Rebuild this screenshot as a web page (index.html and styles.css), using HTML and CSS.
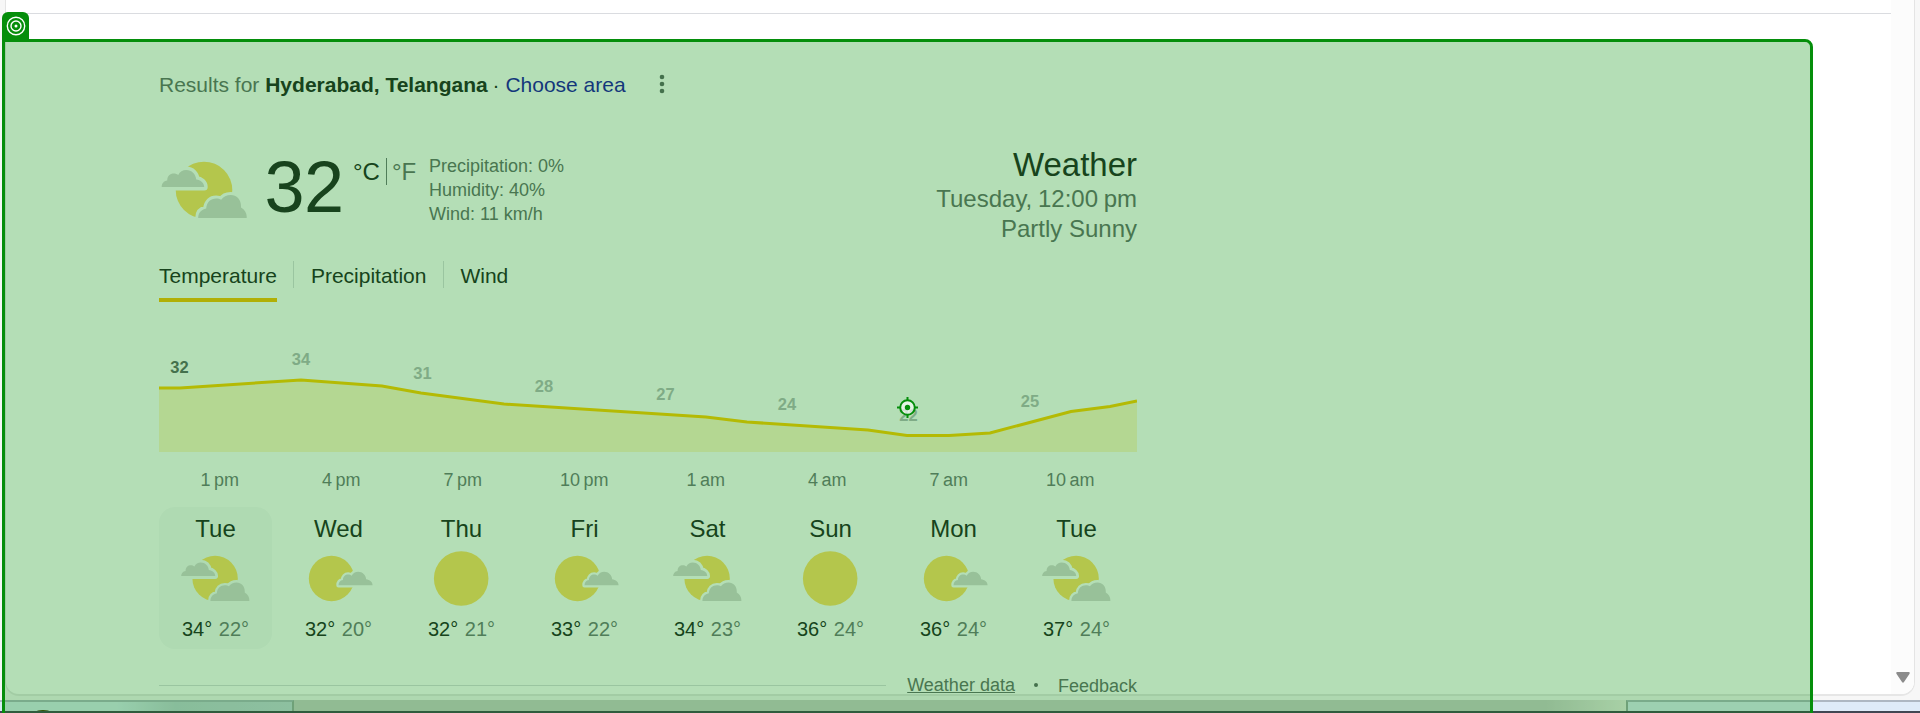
FILE: index.html
```
<!DOCTYPE html>
<html lang="en">
<head>
<meta charset="utf-8">
<title>Weather</title>
<link rel="stylesheet" href="styles.css">
</head>
<body>
<svg class="defs" width="0" height="0">
  <defs>
    <path id="cloud" d="M0 17C0 13.5 2 11 5.500 10.500C5.500 6 8.500 3.500 12 3.500C14 3.500 15 4 16.500 5C18 1.500 21 0 24.500 0C30 0 34 4 34.500 9.500C39 10 42.500 13 42.500 17Z"/>
    <path id="bigcloud" d="M0 23C0 18 3 14.500 8 13.500C8.500 7 12.500 3.500 18 3.500C20 3.500 21.500 3.800 23 4.800C25 1.500 28.500 0 32.500 0C38.500 0 42.800 4.500 42.800 11V12.500C46.500 14.500 48.500 18 48.500 21.500V23Z"/>
    <mask id="gaps" maskUnits="userSpaceOnUse" x="0" y="0" width="96" height="96">
      <rect width="96" height="96" fill="#fff"/>
      <use href="#cloud" x="2.700" y="28" stroke="#000" stroke-width="7" stroke-linejoin="round"/>
      <use href="#bigcloud" x="39.200" y="53" stroke="#000" stroke-width="6" stroke-linejoin="round"/>
    </mask>
    <mask id="gap" maskUnits="userSpaceOnUse" x="0" y="0" width="96" height="96">
      <rect width="96" height="96" fill="#fff"/>
      <use href="#cloud" x="48" y="39.500" stroke="#000" stroke-width="5.500" stroke-linejoin="round"/>
    </mask>
    <symbol id="partly" viewBox="0 0 96 96">
      <circle class="sun" cx="45" cy="48" r="28.300" mask="url(#gaps)"/>
      <use class="cloud" href="#cloud" x="2.700" y="28"/>
      <use class="cloud" href="#bigcloud" x="39.200" y="53"/>
    </symbol>
    <symbol id="mostly" viewBox="0 0 96 96">
      <circle class="sun" cx="39.300" cy="48" r="28.300" mask="url(#gap)"/>
      <use class="cloud" href="#cloud" x="48" y="39.500"/>
    </symbol>
    <symbol id="sunny" viewBox="0 0 96 96"><circle class="sun" cx="47.600" cy="48" r="34"/></symbol>
  </defs>
</svg>
<div class="window">
  <div class="panel">
    <div class="page">
      <div class="rule"></div>
      <main class="weather">
        <div class="results">
          <span>Results for <b>Hyderabad, Telangana</b> <span class="ink">·</span> <a class="link">Choose area</a></span>
          <svg class="more" width="6" height="20" viewBox="0 0 6 20"><circle cx="3" cy="3" r="2.300"/><circle cx="3" cy="10" r="2.300"/><circle cx="3" cy="17" r="2.300"/></svg>
        </div>
        <section class="current">
          <svg class="now-icon" width="96" height="96"><use href="#partly"/></svg>
          <div class="degrees">32</div>
          <div class="units"><span class="ink">°C</span><i></i><span>°F</span></div>
          <div class="details"><div>Precipitation: 0%</div><div>Humidity: 40%</div><div>Wind: 11 km/h</div></div>
          <div class="summary"><h1>Weather</h1><div class="when">Tuesday, 12:00 pm</div><div>Partly Sunny</div></div>
        </section>
        <nav class="tabs"><a class="tab active">Temperature</a><i></i><a class="tab">Precipitation</a><i></i><a class="tab">Wind</a></nav>
        <svg class="chart" width="978" height="112" viewBox="0 0 978 112">
          <path class="area" d="M0 48H21L142 40L223 46L262 53L345 64L547 77L588 82L709 90L748 95.500H790L831 93L912 71.500L951 66.500L978 61V112H0Z"/>
          <path class="line" d="M0 48H21L142 40L223 46L262 53L345 64L547 77L588 82L709 90L748 95.500H790L831 93L912 71.500L951 66.500L978 61"/>
          <g class="points"><text class="now" x="20.500" y="33">32</text><text x="142" y="25">34</text><text x="263.500" y="39">31</text><text x="385" y="52">28</text><text x="506.500" y="60">27</text><text x="628" y="70">24</text><text x="749.500" y="81">22</text><text x="871" y="67">25</text></g>
        </svg>
        <div class="hours"><span>1 pm</span><span>4 pm</span><span>7 pm</span><span>10 pm</span><span>1 am</span><span>4 am</span><span>7 am</span><span>10 am</span></div>
        <div class="days">
          <div class="day selected"><span>Tue</span><svg class="shift"><use href="#partly"/></svg><p>34° <em>22°</em></p></div>
          <div class="day"><span>Wed</span><svg><use href="#mostly"/></svg><p>32° <em>20°</em></p></div>
          <div class="day"><span>Thu</span><svg><use href="#sunny"/></svg><p>32° <em>21°</em></p></div>
          <div class="day"><span>Fri</span><svg><use href="#mostly"/></svg><p>33° <em>22°</em></p></div>
          <div class="day"><span>Sat</span><svg class="shift"><use href="#partly"/></svg><p>34° <em>23°</em></p></div>
          <div class="day"><span>Sun</span><svg><use href="#sunny"/></svg><p>36° <em>24°</em></p></div>
          <div class="day"><span>Mon</span><svg><use href="#mostly"/></svg><p>36° <em>24°</em></p></div>
          <div class="day"><span>Tue</span><svg class="shift"><use href="#partly"/></svg><p>37° <em>24°</em></p></div>
        </div>
        <footer class="source"><hr><a class="data">Weather data</a><span class="bullet"></span><a>Feedback</a></footer>
      </main>
    </div>
    <div class="scroll"><svg width="14" height="11" viewBox="0 0 14 11"><path d="M1.500 0H12.500C13.800 0 14 1 13.400 1.900L8 10Q7 11.400 6 10L.6 1.900C0 1 .2 0 1.500 0Z"/></svg></div>
  </div>
  <div class="strip"><div class="pane left"><svg width="14" height="1"><ellipse cx="7" cy="2" rx="7" ry="2"/></svg></div><div class="pane mid"></div><div class="pane right"></div></div>
</div>
<div class="highlight"></div>
<div class="handle"><svg width="20" height="20" viewBox="0 0 20 20"><circle cx="10" cy="10" r="8.700"/><circle cx="10" cy="10" r="5"/><circle class="dot" cx="10" cy="10" r="1.500"/></svg></div>
<svg class="target" width="22" height="22" viewBox="0 0 22 22"><circle class="ring" cx="11.500" cy="11.500" r="7.300"/><path d="M11.500 1V4.500M11.500 18.500V22M1 11.500H4.500M18.500 11.500H22"/><circle class="dot" cx="11.500" cy="11.500" r="2.700"/></svg>
</body>
</html>
```
FILE: styles.css
```
* { box-sizing: border-box; }
body { margin: 0; width: 1920px; height: 713px; overflow: hidden; position: relative; font-family: "Liberation Sans", Arial, sans-serif; color: #666a6e; background: #f7f7f7; }
.defs { position: absolute; }
.window { height: 713px; display: flex; flex-direction: column; }
.panel { height: 696px; margin: 0 5px; border: 1px solid #e4e4e4; border-top: 0; border-bottom: 2px solid #e6e6e6; border-radius: 0 0 14px 14px; background: #fff; display: flex; overflow: hidden; flex: none; }
.page { flex: 1; }
.scroll { width: 23px; background: #fcfcfc; display: flex; align-items: flex-end; justify-content: center; padding-bottom: 11px; fill: #8b8b8b; }
.rule { height: 14px; border-bottom: 1px solid #dadce0; }
.weather { width: 978px; margin-left: 153px; }
.ink { color: #202124; }
.results { margin-top: 56px; height: 30px; line-height: 30px; font-size: 21px; display: flex; align-items: center; gap: 33.5px; }
.results b { color: #202124; margin-right: -1px; }
.link { color: #1a0dab; }
.more { fill: #5f6368; margin-top: -3px; }
.current { margin-top: 40px; height: 110px; display: flex; align-items: flex-start; }
.now-icon { margin-top: 2px; }
.degrees { font-size: 72px; line-height: 72px; margin: 11px 0 0 9.5px; width: 80px; color: #202124; letter-spacing: -.5px; }
.units { display: flex; margin: 18px 0 0 8.5px; font-size: 24px; line-height: 28px; width: 76px; }
.units i { width: 1px; height: 27px; background: #70757a; margin: 0 5px 0 6px; }
.details { font-size: 18px; line-height: 24px; margin-top: 14px; }
.summary { margin-left: auto; text-align: right; font-size: 24px; line-height: 30px; }
.summary h1 { font-size: 33px; font-weight: 400; line-height: 40px; margin: 5px 0 -1px; color: #202124; }
.when { word-spacing: -1px; }
.tabs { margin-top: 6px; display: flex; font-size: 21px; line-height: 40px; color: #202124; }
.tab { height: 46px; }
.active { border-bottom: 4px solid #fbbc04; }
.tabs i { width: 1px; height: 27px; margin: 5px 16.5px 0 16.5px; background: #dadce0; }
.chart { display: block; margin-top: 38px; }
.area { fill: #fff5cc; }
.line { fill: none; stroke: #fc0; stroke-width: 3; }
.points { font-size: 16.5px; font-weight: 700; text-anchor: middle; fill: #b4b7ba; }
.now { fill: #5f6368; }
.hours { display: flex; margin-top: 16px; font-size: 18px; line-height: 24px; color: #70757a; word-spacing: -1.5px; }
.hours span { width: 121.5px; text-align: center; }
.days { display: flex; gap: 10px; margin-top: 15px; }
.day { width: 113px; height: 142px; border-radius: 16px; text-align: center; color: #202124; font-size: 24px; line-height: 30px; padding-top: 7px; display: flex; flex-direction: column; align-items: center; }
.day svg { width: 77px; height: 77px; margin-top: -4px; flex: none; }
.day .shift { margin-left: 4px; }
.day p { margin: -3px 0 0; font-size: 20px; word-spacing: 1px; line-height: 30px; white-space: nowrap; }
.day em { font-style: normal; color: #70757a; }
.selected { background: #f8f9fa; }
.sun { fill: #ffdd67; }
.cloud { fill: #d7d6d6; }
.source { margin-top: 24px; height: 24px; line-height: 24px; font-size: 18px; display: flex; align-items: center; }
.source hr { flex: 1; margin: 0 21px 0 0; border: 0; height: 1px; background: #dadce0; }
.data { text-decoration: underline; margin-top: -1px; }
.bullet { width: 4px; height: 4px; border-radius: 50%; background: #5f6368; margin: 0 19.5px; }
.source a:last-child { margin-top: 1px; }
.strip { height: 13px; margin-top: 4px; display: flex; border-bottom: 2px solid #414652; flex: none; }
.pane { border-top: 2px solid #adb7c2; background: #deebf8; }
.left { width: 294px; border-right: 2px solid #9da8a6; background: linear-gradient(90deg, #d8eaf3 40%, #c1d0d8 60%, #c8d4e0); display: flex; align-items: flex-end; padding-left: 36px; fill: #433300; }
.mid { width: 1332px; border: 0; background: linear-gradient(90deg, #cdcdcd 94%, #eeece8); }
.right { flex: 1; border-left: 2px solid #9da8a6; }
.highlight { position: absolute; left: 2px; top: 39px; width: 1811px; height: 690px; border: 3px solid #058e0b; border-radius: 0 8px 0 0; background: rgba(5,145,13,.3); background-clip: padding-box; }
.handle { position: absolute; left: 2px; top: 12px; width: 27px; height: 28px; border-radius: 6px 6px 0 0; background: #058e0b; padding: 4px 0 0 3.500px; }
.handle svg { display: block; fill: none; stroke: #fff; stroke-width: 1.4; }
.handle .dot { fill: #fff; stroke: none; }
.target { position: absolute; left: 896px; top: 396px; stroke: #058e0b; stroke-width: 2; }
.target .ring { fill: rgba(255,255,255,.65); }
.target .dot { fill: #058e0b; stroke: none; }
```
